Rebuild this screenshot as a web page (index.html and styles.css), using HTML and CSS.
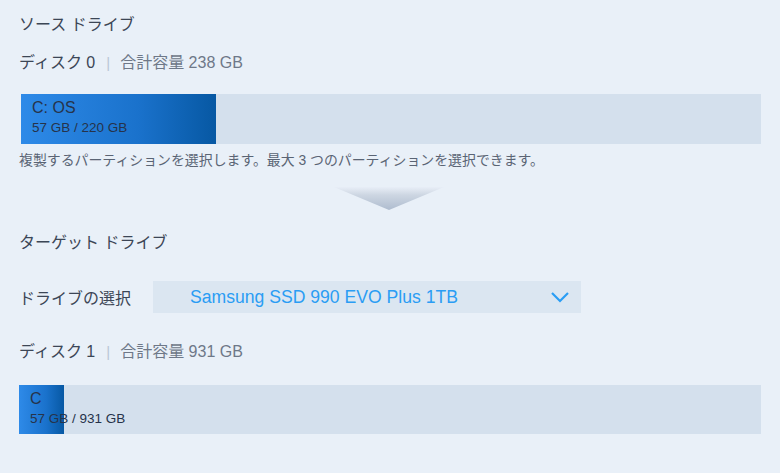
FILE: index.html
```html
<!DOCTYPE html>
<html lang="ja">
<head>
<meta charset="utf-8">
<link rel="stylesheet" href="styles.css">
</head>
<body>
<div class="page">
  <section class="source">
    <h2 class="title">ソース ドライブ</h2>
    <div class="disk-info"><span class="disk-name">ディスク 0</span><span class="sep">|</span><span class="cap">合計容量 238 GB</span></div>
    <div class="bar bar-src">
      <div class="fill" style="width: 26.4%"></div>
      <div class="bar-text">
        <div class="part">C: OS</div>
        <div class="size">57 GB / 220 GB</div>
      </div>
    </div>
    <p class="note">複製するパーティションを選択します。最大 3 つのパーティションを選択できます。</p>
  </section>
  <div class="arrow-row"><div class="arrow"></div></div>
  <section class="target">
    <h2 class="title">ターゲット ドライブ</h2>
    <div class="select-row">
      <span class="select-label">ドライブの選択</span>
      <div class="select">
        <span class="select-value">Samsung SSD 990 EVO Plus 1TB</span>
        <svg class="chev" width="20" height="12" viewBox="0 0 20 12"><path d="M2 2 L10 10 L18 2" fill="none" stroke="#2a9df4" stroke-width="2.2"/></svg>
      </div>
    </div>
    <div class="disk-info disk1"><span class="disk-name">ディスク 1</span><span class="sep">|</span><span class="cap">合計容量 931 GB</span></div>
    <div class="bar bar-tgt">
      <div class="fill" style="width: 6.1%"></div>
      <div class="bar-text">
        <div class="part">C</div>
        <div class="size">57 GB / 931 GB</div>
      </div>
    </div>
  </section>
</div>
</body>
</html>
```
FILE: styles.css
```css
html, body {
  margin: 0;
  padding: 0;
  background: #e9f0f8;
}
body {
  font-family: "Liberation Sans", Arial, "Noto Sans CJK JP", sans-serif;
  color: #3c4656;
  width: 780px;
  height: 473px;
  overflow: hidden;
}
.page {
  padding: 15px 19px 0 19px;
}
.title {
  margin: 0;
  font-size: 16px;
  font-weight: normal;
  line-height: 20px;
  color: #3c4656;
}
.disk-info {
  margin-top: 18px;
  font-size: 16px;
  line-height: 20px;
  display: flex;
  align-items: center;
}
.disk-name { color: #3c4656; }
.sep { color: #b9c6d6; margin: 0 10px 0 11px; font-size: 15px; }
.cap { color: #6e7888; }
.bar {
  position: relative;
  height: 50px;
  background: #d4e0ed;
  overflow: hidden;
}
.bar-src {
  margin: 21px 0 0 2px;
  width: 740px;
}
.bar-tgt {
  margin-top: 23px;
  width: 742px;
  height: 49px;
}
.fill {
  position: absolute;
  left: 0; top: 0; bottom: 0;
  background: linear-gradient(90deg, #2e8ae8 0%, #1a72cc 60%, #0758a3 100%);
}
.bar-text {
  position: relative;
  padding: 5px 0 0 11px;
  color: #26334a;
}
.part { font-size: 16px; line-height: 18px; }
.size { font-size: 13.5px; line-height: 16px; margin-top: 3px; }
.note {
  margin: 7px 0 0 0;
  font-size: 13.9px;
  line-height: 18px;
  color: #5a6474;
}
.arrow-row {
  display: flex;
  justify-content: center;
  margin-top: 18px;
  padding-right: 2px;
}
.arrow {
  width: 110px;
  height: 23px;
  clip-path: polygon(0 0, 100% 0, 50% 100%);
  background: linear-gradient(180deg, #e8eef7 0%, #cdd6e2 35%, #aebccf 100%);
}
.target .title { margin-top: 23px; }
.select-row {
  display: flex;
  align-items: center;
  margin-top: 28px;
}
.select-label {
  font-size: 16px;
  color: #3c4656;
  width: 134px;
}
.select {
  width: 428px;
  height: 32px;
  background: #dbe6f1;
  display: flex;
  align-items: center;
  justify-content: space-between;
  box-sizing: border-box;
  padding: 0 11px 0 37px;
}
.select-value {
  font-size: 17.6px;
  color: #2a9df4;
}
.chev { display: block; }
.disk1 { margin-top: 29px; }
```
